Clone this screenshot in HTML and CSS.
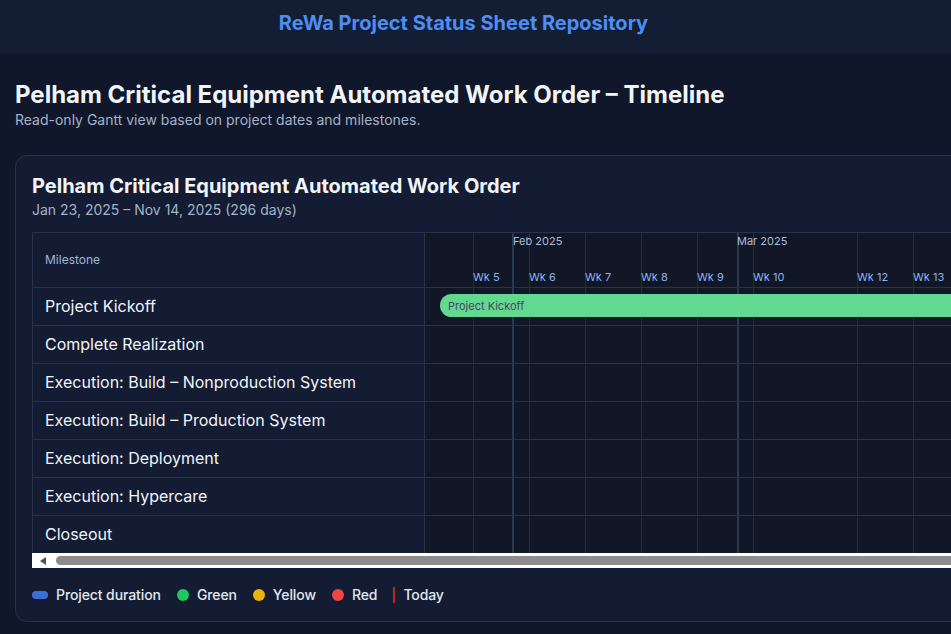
FILE: index.html
```html
<!DOCTYPE html>
<html lang="en">
<head>
<meta charset="utf-8">
<title>Timeline</title>
<link rel="stylesheet" href="styles.css">
</head>
<body>
<header class="topbar">
  <h1 class="brand">ReWa Project Status Sheet Repository</h1>
</header>
<main class="page">
  <h2 class="page-title">Pelham Critical Equipment Automated Work Order – Timeline</h2>
  <p class="page-sub">Read-only Gantt view based on project dates and milestones.</p>

  <section class="card">
    <h3 class="card-title">Pelham Critical Equipment Automated Work Order</h3>
    <p class="card-sub">Jan 23, 2025 – Nov 14, 2025 (296 days)</p>

    <div class="gantt">
      <div class="labels">
        <div class="label-head">Milestone</div>
        <div class="label-row">Project Kickoff</div>
        <div class="label-row">Complete Realization</div>
        <div class="label-row">Execution: Build – Nonproduction System</div>
        <div class="label-row">Execution: Build – Production System</div>
        <div class="label-row">Execution: Deployment</div>
        <div class="label-row">Execution: Hypercare</div>
        <div class="label-row">Closeout</div>
      </div>
      <div class="timeline">
        <div class="lines">
          <span class="vline week" style="left:48px"></span>
          <span class="vline month" style="left:87px"></span>
          <span class="vline week" style="left:104px"></span>
          <span class="vline week" style="left:160px"></span>
          <span class="vline week" style="left:216px"></span>
          <span class="vline week" style="left:272px"></span>
          <span class="vline month" style="left:312px"></span>
          <span class="vline week" style="left:328px"></span>
          <span class="vline week" style="left:432px"></span>
          <span class="vline week" style="left:488px"></span>
          <span class="vline week" style="left:544px"></span>
        </div>
        <div class="tl-head">
          <span class="month-label" style="left:88px">Feb 2025</span>
          <span class="month-label" style="left:312px">Mar 2025</span>
          <span class="week-label" style="left:48px">Wk 5</span>
          <span class="week-label" style="left:104px">Wk 6</span>
          <span class="week-label" style="left:160px">Wk 7</span>
          <span class="week-label" style="left:216px">Wk 8</span>
          <span class="week-label" style="left:272px">Wk 9</span>
          <span class="week-label" style="left:328px">Wk 10</span>
          <span class="week-label" style="left:432px">Wk 12</span>
          <span class="week-label" style="left:488px">Wk 13</span>
        </div>
        <div class="tl-row"><div class="bar" style="left:15px;width:900px">Project Kickoff</div></div>
        <div class="tl-row"></div>
        <div class="tl-row"></div>
        <div class="tl-row"></div>
        <div class="tl-row"></div>
        <div class="tl-row"></div>
        <div class="tl-row"></div>
      </div>
    </div>
    <div class="hscroll">
      <span class="arrow"></span>
      <span class="thumb"></span>
    </div>

    <ul class="legend">
      <li class="legend-item"><span class="swatch pill"></span>Project duration</li>
      <li class="legend-item"><span class="swatch dot green"></span>Green</li>
      <li class="legend-item"><span class="swatch dot yellow"></span>Yellow</li>
      <li class="legend-item"><span class="swatch dot red"></span>Red</li>
      <li class="legend-item"><span class="swatch today"></span>Today</li>
    </ul>
  </section>
</main>
</body>
</html>
```
FILE: styles.css
```css
* { box-sizing: border-box; }
html, body { margin: 0; padding: 0; }
body {
  background: #10172a;
  font-family: Inter, "Noto Sans", "Liberation Sans", sans-serif;
  color: #f1f5f9;
  overflow: hidden;
  width: 951px;
  height: 634px;
}
.topbar {
  height: 54px;
  background: #131d33;
  display: flex;
  align-items: center;
  justify-content: center;
  padding: 0 24px 8px 0;
}
.brand {
  margin: 0;
  font-size: 20px;
  font-weight: 700;
  color: #4d8ef5;
}
.page {
  padding: 26px 15px 0;
  width: 1300px;
}
.page-title {
  margin: 0;
  font-size: 24px;
  line-height: 30px;
  font-weight: 700;
  color: #f1f5f9;
}
.page-sub {
  margin: 0;
  font-size: 14px;
  line-height: 20px;
  color: #a3b3c9;
}
.card {
  margin-top: 25px;
  width: 1200px;
  background: #131c33;
  border: 1px solid #27334a;
  border-radius: 12px;
  padding: 16px;
}
.card-title {
  margin: 0;
  font-size: 20px;
  line-height: 28px;
  font-weight: 700;
  color: #f1f5f9;
}
.card-sub {
  margin: 0;
  font-size: 14px;
  line-height: 20px;
  color: #a3b3c9;
}
.gantt {
  margin-top: 12px;
  display: flex;
  border-top: 1px solid #27334a;
  border-left: 1px solid #27334a;
}
.labels {
  width: 392px;
  flex: none;
  border-right: 1px solid #27334a;
  background: #131c33;
}
.label-head {
  height: 55px;
  border-bottom: 1px solid #27334a;
  display: flex;
  align-items: center;
  padding: 0 0 1px 12px;
  font-size: 12px;
  color: #9cb6da;
}
.label-row {
  height: 38px;
  border-bottom: 1px solid #27334a;
  display: flex;
  align-items: center;
  padding: 0 0 1px 12px;
  font-size: 16px;
  color: #f1f5f9;
}
.label-row:last-child { border-bottom: none; height: 37px; }
.timeline {
  flex: 1;
  position: relative;
  background: #111727;
}
.lines { position: absolute; inset: 0; pointer-events: none; }
.vline {
  position: absolute;
  top: 0;
  bottom: 0;
  width: 1px;
  background: #222d42;
}
.vline.month { width: 2px; background: #2b3852; }
.tl-head {
  position: relative;
  height: 55px;
  border-bottom: 1px solid #27334a;
}
.month-label, .week-label {
  position: absolute;
  font-size: 11px;
  line-height: 14px;
  white-space: nowrap;
}
.month-label { top: 1px; color: #a9bddb; }
.week-label { top: 37px; color: #8db3ee; }
.tl-row {
  position: relative;
  height: 38px;
  border-bottom: 1px solid #27334a;
}
.tl-row:last-child { border-bottom: none; height: 37px; }
.bar {
  position: absolute;
  top: 6px;
  height: 23px;
  background: #63d891;
  border-radius: 12px;
  color: #3f4b59;
  font-size: 11px;
  line-height: 24px;
  padding-left: 8px;
  white-space: nowrap;
}
.hscroll {
  height: 15px;
  background: #ffffff;
  display: flex;
  align-items: center;
  padding-left: 8px;
  gap: 10px;
}
.arrow {
  width: 0;
  height: 0;
  border-top: 4.5px solid transparent;
  border-bottom: 4.5px solid transparent;
  border-right: 6px solid #505050;
}
.thumb {
  flex: 1;
  height: 9px;
  background: #8c8c8c;
  border-radius: 5px;
}
.legend {
  list-style: none;
  margin: 17px 0 0;
  padding: 0;
  display: flex;
  align-items: center;
  gap: 16px;
}
.legend-item {
  display: flex;
  align-items: center;
  gap: 8px;
  font-size: 14px;
  line-height: 20px;
  font-weight: 500;
  letter-spacing: -0.1px;
  color: #e2e8f0;
}
.swatch { display: inline-block; flex: none; }
.pill { width: 16px; height: 8px; border-radius: 4px; background: #3b6fd8; }
.dot { width: 12px; height: 12px; border-radius: 50%; }
.green { background: #22c55e; }
.yellow { background: #eab308; }
.red { background: #ef4444; }
.today { width: 2px; height: 16px; background: #c02626; }
```
